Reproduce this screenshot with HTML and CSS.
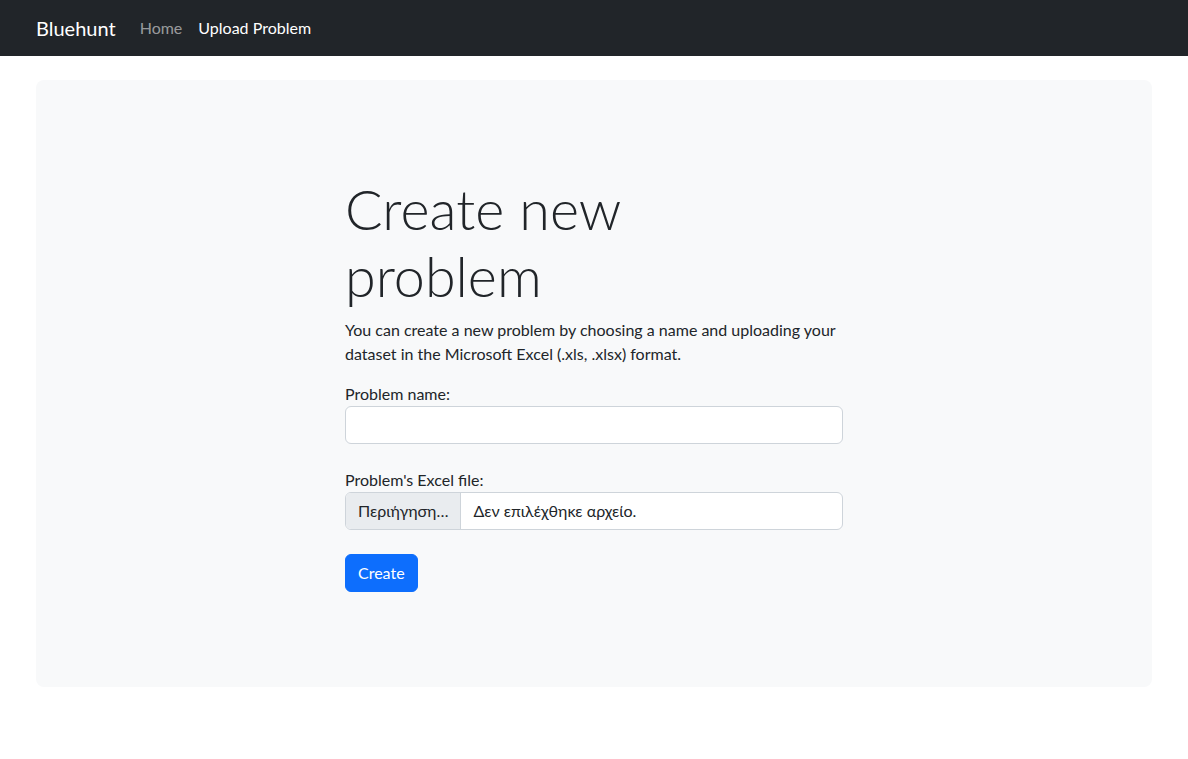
FILE: index.html
```html
<!DOCTYPE html>
<html lang="en">
<head>
<meta charset="utf-8">
<title>Bluehunt</title>
<link rel="stylesheet" href="styles.css">
</head>
<body>
<nav class="navbar">
  <a class="brand" href="#">Bluehunt</a>
  <ul class="nav">
    <li><a class="nav-link" href="#">Home</a></li>
    <li><a class="nav-link active" href="#">Upload Problem</a></li>
  </ul>
</nav>
<main class="page">
  <section class="jumbo">
    <div class="col">
      <h1 class="display">Create new problem</h1>
      <p class="lead-text">You can create a new problem by choosing a name and uploading your dataset in the Microsoft Excel (.xls, .xlsx) format.</p>
      <form class="form">
        <div class="field">
          <label class="label" for="pname">Problem name:</label>
          <input class="input" id="pname" type="text">
        </div>
        <div class="field">
          <label class="label">Problem's Excel file:</label>
          <div class="file">
            <span class="file-btn">Περιήγηση…</span>
            <span class="file-name">Δεν επιλέχθηκε αρχείο.</span>
          </div>
        </div>
        <button class="btn" type="button">Create</button>
      </form>
    </div>
  </section>
</main>
</body>
</html>
```
FILE: styles.css
```css
* { box-sizing: border-box; }
html, body { margin: 0; padding: 0; }
body {
  font-family: Lato, "Liberation Sans", sans-serif;
  font-size: 16px;
  line-height: 1.5;
  color: #212529;
  background: #fff;
}
.navbar {
  height: 56px;
  background: #212529;
  display: flex;
  align-items: center;
  padding: 0 36px;
}
.brand {
  color: #fff;
  text-decoration: none;
  font-size: 20px;
  margin-right: 16px;
}
.nav {
  display: flex;
  list-style: none;
  margin: 0;
  padding: 0;
}
.nav-link {
  display: block;
  padding: 8px;
  color: rgba(255,255,255,.55);
  text-decoration: none;
}
.nav-link.active { color: #fff; }
.page {
  padding: 24px 36px;
}
.jumbo {
  background: #f8f9fa;
  border-radius: 8px;
  height: 607px;
  display: flex;
  justify-content: center;
  padding-top: 96px;
}
.col { width: 498px; }
.display {
  max-width: 440px;
  font-size: 55.68px;
  font-weight: 300;
  line-height: 1.2;
  margin: 0 0 8px;
}
.lead-text { margin: 0 0 16px; }
.field { margin-bottom: 24px; }
.label { display: block; }
.input {
  display: block;
  width: 100%;
  height: 38px;
  border: 1px solid #ced4da;
  border-radius: 6px;
  background: #fff;
  font: inherit;
}
.file {
  display: flex;
  height: 38px;
  border: 1px solid #ced4da;
  border-radius: 6px;
  background: #fff;
  overflow: hidden;
}
.file-btn {
  background: #e9ecef;
  border-right: 1px solid #ced4da;
  padding: 6px 12px;
  white-space: nowrap;
}
.file-name { padding: 6px 12px; }
.btn {
  font: inherit;
  color: #fff;
  background: #0d6efd;
  border: 1px solid #0d6efd;
  border-radius: 6px;
  height: 38px;
  padding: 0 12px;
}
```
